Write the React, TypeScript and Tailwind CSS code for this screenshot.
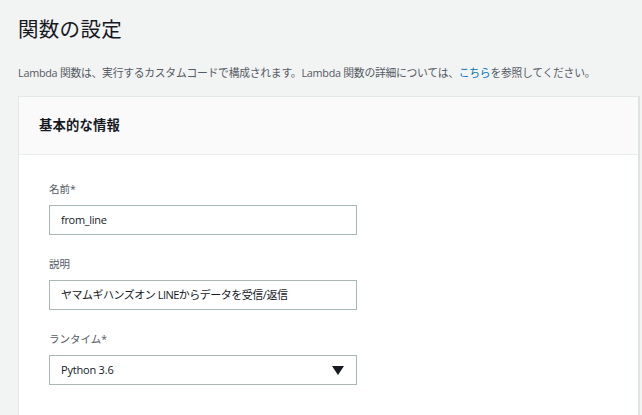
export default function App() {
  return (
    <main
      className="min-h-[415px] h-[415px] overflow-hidden bg-[#f2f3f3] pl-[18px] pr-[2px] text-[#16191f]"
      style={{ fontFamily: '"Open Sans", "Noto Sans CJK JP", sans-serif' }}
    >
      {/* PAGE HEADER */}
      <h1 className="pt-[14px] text-[20.5px] leading-[30px] font-normal tracking-[0.3px]">関数の設定</h1>
      <p className="mt-[20px] whitespace-nowrap text-[10.8px] leading-[18px] tracking-[-0.25px] text-[#545b64]">
        Lambda 関数は、実行するカスタムコードで構成されます。Lambda 関数の詳細については、
        <a className="text-[#0073bb]">こちら</a>
        を参照してください。
      </p>

      {/* CARD */}
      <section className="mt-[14px] h-[340px] border-l border-r-2 border-t border-[#e4e7e7] border-r-[#dfe3e3] bg-white">
        <div className="flex h-[58px] items-center border-b border-[#eaeded] bg-[#fafafa] pl-[20px]">
          <h2 className="text-[13.3px] font-bold tracking-[0.2px]">基本的な情報</h2>
        </div>

        <div className="flex w-[338px] flex-col pl-[30px] pt-[25px]">
          <label className="text-[10.5px] leading-[18px] text-[#545b64]">名前*</label>
          <div className="mt-[7px] flex h-[30px] items-center border border-[#aab7b8] bg-white px-[11px] text-[11px] tracking-[-0.3px]">
            from_line
          </div>

          <label className="mt-[20px] text-[10.5px] leading-[18px] text-[#545b64]">説明</label>
          <div className="mt-[7px] flex h-[30px] items-center border border-[#aab7b8] bg-white px-[11px] text-[11px] tracking-[-0.5px]">
            ヤマムギハンズオン LINEからデータを受信/返信
          </div>

          <label className="mt-[20px] text-[10.5px] leading-[18px] text-[#545b64]">ランタイム*</label>
          <div className="mt-[7px] flex h-[30px] items-center justify-between border border-[#aab7b8] bg-white pl-[11px] pr-[12px] text-[11px] tracking-[-0.2px]">
            <span>Python 3.6</span>
            <svg width="12" height="9" viewBox="0 0 12 9" className="mt-[1px]">
              <path d="M0 0h12L6 9z" fill="#16191f" />
            </svg>
          </div>
        </div>
      </section>
    </main>
  );
}
